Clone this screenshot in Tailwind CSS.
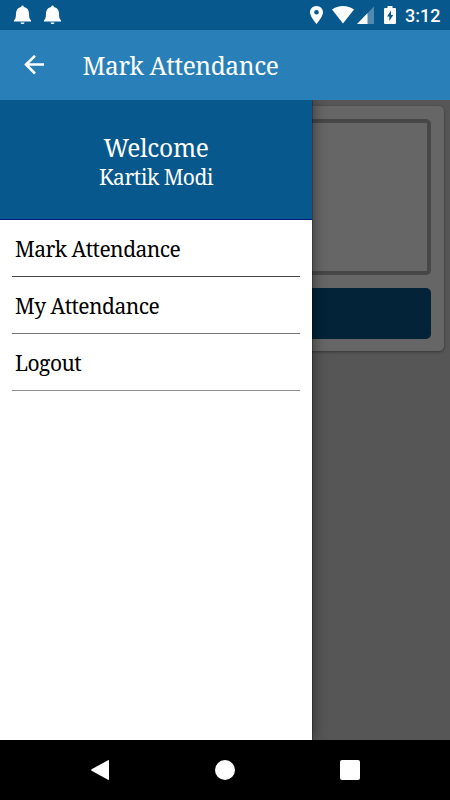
<!DOCTYPE html>
<html lang="en">

<head>
  <meta charset="UTF-8">
  <meta name="viewport" content="width=device-width, initial-scale=1.0">
  <title>Mark Attendance</title>
  <script src="https://cdn.jsdelivr.net/npm/@tailwindcss/browser@4"></script>
</head>

<body class="w-[450px] h-[800px] overflow-hidden flex flex-col bg-black font-['Noto_Serif','Droid_Serif','DejaVu_Serif',serif]">
  <!-- status bar -->
  <div class="h-[30px] shrink-0 flex items-center bg-[#06588d] pl-[13px] pr-[10px] text-white">
    <svg class="w-[19px] h-[20px]" viewBox="0 0 19 20" fill="currentColor">
      <path d="M8.200 2V1.800a1.300 1.300 0 0 1 2.600 0V2c3.200.6 5.200 3 5.200 6.200 0 4 .6 6 2 7v1.300H1v-1.300c1.400-1 2-3 2-7C3 5 5 2.600 8.200 2zM7.500 17.500h4a2 1.600 0 0 1-4 0z" />
    </svg>
    <svg class="w-[19px] h-[20px] ml-[11px]" viewBox="0 0 19 20" fill="currentColor">
      <path d="M8.200 2V1.800a1.300 1.300 0 0 1 2.600 0V2c3.200.6 5.200 3 5.200 6.200 0 4 .6 6 2 7v1.300H1v-1.300c1.400-1 2-3 2-7C3 5 5 2.600 8.200 2zM7.500 17.500h4a2 1.600 0 0 1-4 0z" />
    </svg>
    <div class="ml-auto flex items-center">
      <svg class="w-[13px] h-[18px]" viewBox="5 2 14 20" preserveAspectRatio="none" fill="currentColor">
        <path d="M12 2C8.130 2 5 5.130 5 9c0 5.250 7 13 7 13s7-7.750 7-13c0-3.870-3.130-7-7-7zm0 9.500a2.500 2.500 0 1 1 0-5 2.500 2.500 0 0 1 0 5z" />
      </svg>
      <svg class="w-[22px] h-[18px] ml-[9px]" viewBox="0 0 22 18" fill="currentColor">
        <path d="M11 17.500L0 3.500C3 1.200 7 0 11 0s8 1.200 11 3.500z" />
      </svg>
      <svg class="w-[17px] h-[18px] ml-[3px]" viewBox="0 0 17 18" fill="currentColor">
        <path d="M17 .5V18H0z" fill-opacity=".3" />
        <path d="M10.500 7.200V18H0z" />
      </svg>
      <svg class="w-[12px] h-[18px] ml-[10px]" viewBox="0 0 12 18" fill="currentColor">
        <path fill-rule="evenodd" d="M3.500 0h5v2H11q1 0 1 1v14q0 1-1 1H1q-1 0-1-1V3q0-1 1-1h2.500zM7 4.500L3 10.500h2.300v4.500L9.300 9H7z" />
      </svg>
      <span class="w-[35px] ml-[9px] mt-[2px] font-['Roboto',sans-serif] font-medium text-[18px] leading-[20px] whitespace-nowrap">3:12</span>
    </div>
  </div>

  <!-- toolbar -->
  <div class="h-[70px] shrink-0 flex items-center bg-[#2980b9] pl-[24px] text-white">
    <svg class="w-[21px] h-[20px]" viewBox="0 0 21 20" fill="none" stroke="currentColor" stroke-width="2.500">
      <path d="M20 9.500H2.200M11 .8L2 9.500l9 9" />
    </svg>
    <h1 class="ml-[37.5px] pt-[2px] text-[24.5px] leading-[32px] tracking-[-0.42px] whitespace-nowrap">Mark Attendance</h1>
  </div>

  <div class="h-[640px] shrink-0 relative overflow-hidden bg-[#565656]">
    <!-- page under the drawer -->
    <div class="mx-[6px] mt-[6px] h-[245px] rounded-[5px] bg-[#666666] p-[13px] shadow-[0_1px_3px_rgba(0,0,0,0.4)]">
      <div class="h-[156px] rounded-[5px] border-4 border-[#474747]"></div>
      <div class="mt-[13px] h-[51px] rounded-[5px] bg-[#022338]"></div>
    </div>

    <!-- drawer -->
    <div class="absolute left-0 top-0 w-[312px] h-full bg-white shadow-[1px_0_0_rgba(0,0,0,0.25),2px_0_12px_rgba(0,0,0,0.4)]">
      <div class="h-[120px] flex flex-col items-center bg-[#06588d] border-b border-[#001a80] pt-[32px] text-white">
        <p class="text-[24.5px] leading-[32px] tracking-[-0.3px]">Welcome</p>
        <p class="text-[21px] leading-[27px] tracking-[-0.5px]">Kartik Modi</p>
      </div>
      <ul class="mx-[12px] text-[21px] tracking-[-0.54px] text-black">
        <li class="h-[57px] pl-[3px] border-b border-[#48484c] leading-[59px]">Mark Attendance</li>
        <li class="h-[57px] pl-[3px] border-b border-[#77777a] leading-[59px]">My Attendance</li>
        <li class="h-[57px] pl-[3px] border-b border-[#8e8e90] leading-[59px]">Logout</li>
      </ul>
    </div>
  </div>

  <!-- navigation bar -->
  <div class="h-[60px] shrink-0 flex items-center bg-black pl-[91px] text-white">
    <svg class="w-[18px] h-[20px]" viewBox="0 0 18 20" fill="currentColor">
      <path d="M17 .2q1-.4 1 .6v18.400q0 1-1 .6L.6 10.700q-.9-.7 0-1.400z" />
    </svg>
    <div class="ml-[106px] size-[20px] rounded-full bg-white"></div>
    <div class="ml-[105px] size-[20px] rounded-[2px] bg-white"></div>
  </div>
</body>

</html>
